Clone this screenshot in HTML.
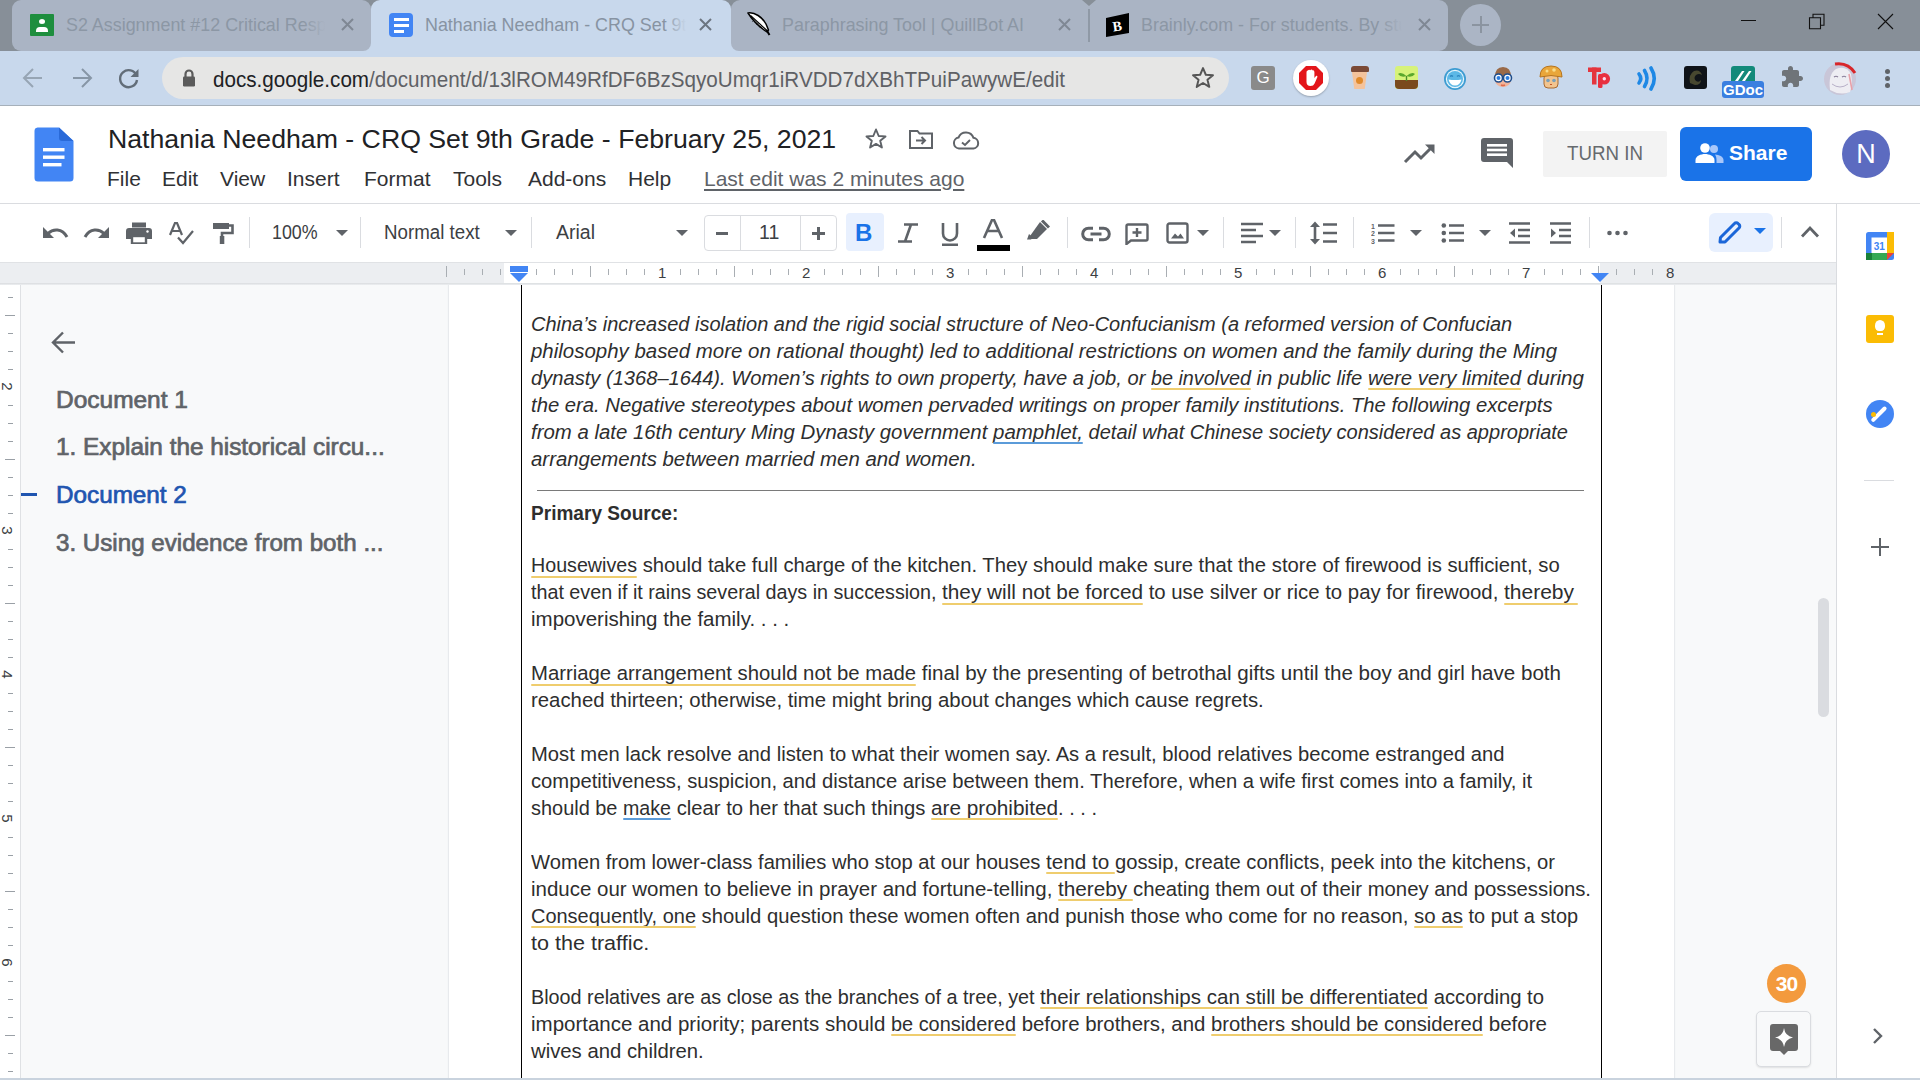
<!DOCTYPE html>
<html><head><meta charset="utf-8"><style>
*{margin:0;padding:0;box-sizing:border-box}
html,body{width:1920px;height:1080px;overflow:hidden;background:#fff;font-family:"Liberation Sans",sans-serif;position:relative}
.a{position:absolute}
.tabt{position:absolute;top:14px;font-size:17.9px;white-space:nowrap;overflow:hidden;line-height:22px}
.ln{position:absolute;left:531px;font-size:19.7px;line-height:27px;white-space:nowrap;color:#2e2e2e;transform-origin:0 0}
.it{font-style:italic}
.ul{position:absolute;height:2px;background:#efcd6e;border-radius:1px}
.ulb{background:#5b9bd9}
.mn{position:absolute;top:167px;font-size:21px;color:#303134;line-height:24px;white-space:nowrap}
.ic{position:absolute}
.sep{position:absolute;top:217px;width:1px;height:31px;background:#dadce0}
.dd{position:absolute;width:0;height:0;border-left:6px solid transparent;border-right:6px solid transparent;border-top:6px solid #5f6368}
.ol{position:absolute;left:56px;font-size:23px;color:#5f6368;white-space:nowrap;line-height:28px;font-weight:normal;-webkit-text-stroke:0.7px currentColor}
</style></head><body>
<!-- TAB STRIP -->
<div class="a" style="left:0;top:0;width:1920px;height:51px;background:#878f98"></div>
<div class="a" style="left:12px;top:0;width:359px;height:51px;background:#aab4c4;border-radius:9px"></div>
<div class="a" style="left:731px;top:0;width:717px;height:51px;background:#aab4c4;border-radius:9px"></div>
<div class="a" style="left:1082px;top:0;width:14px;height:6px;background:#878f98;clip-path:polygon(0 0,100% 0,50% 100%)"></div>
<div class="a" style="left:1088px;top:9px;width:2px;height:33px;background:#8f99a6"></div>
<!-- active tab with flares -->
<div class="a" style="left:363px;top:43px;width:376px;height:8px;background:#c8d8ec"></div>
<div class="a" style="left:355px;top:35px;width:16px;height:16px;background:#aab4c4;border-radius:0 0 8px 0"></div>
<div class="a" style="left:731px;top:35px;width:16px;height:16px;background:#aab4c4;border-radius:0 0 0 8px"></div>
<div class="a" style="left:371px;top:0;width:360px;height:51px;background:#c8d8ec;border-radius:9px 9px 0 0"></div>
<!-- favicons -->
<div class="a" style="left:30px;top:14px;width:24px;height:22px;background:#1e8e3e;border-radius:1px"></div>
<div class="a" style="left:39px;top:19px;width:6px;height:5px;background:#fff;border-radius:50%"></div>
<div class="a" style="left:36px;top:27px;width:12px;height:5px;background:#fff;border-radius:4px 4px 0 0"></div>
<div class="a tabt" style="left:66px;width:262px;color:#8c97a5">S2 Assignment #12 Critical Response</div>
<div class="a" style="left:303px;top:10px;width:30px;height:32px;background:linear-gradient(90deg,rgba(170,180,196,0),#aab4c4 75%)"></div>
<div class="a" style="left:389px;top:13px;width:24px;height:24px;background:#4285f4;border-radius:4px"></div>
<div class="a" style="left:394px;top:18px;width:15px;height:3px;background:#fff"></div>
<div class="a" style="left:394px;top:24px;width:15px;height:3px;background:#fff"></div>
<div class="a" style="left:394px;top:30px;width:10px;height:3px;background:#fff"></div>
<div class="a tabt" style="left:425px;width:266px;color:#8793a2">Nathania Needham - CRQ Set 9th Grade</div>
<div class="a" style="left:664px;top:10px;width:30px;height:32px;background:linear-gradient(90deg,rgba(200,216,236,0),#c8d8ec 75%)"></div>
<svg class="a" style="left:746px;top:11px" width="26" height="26" viewBox="0 0 26 26"><path d="M2 2 C9 1 16 6 20 13 L22.5 19 L21 21 C15 17 7 10 2 2 Z" fill="#fff" stroke="#000" stroke-width="1.5" stroke-linejoin="round"/><path d="M4.5 4.5 L21 19.5" stroke="#000" stroke-width="1.2"/><path d="M20.5 19 L23.5 24" stroke="#000" stroke-width="2"/><path d="M8 9 L6.5 10.5 M12 12.5 L10.5 14 M15 15.5 L14 16.5" stroke="#000" stroke-width="0.9"/></svg>
<div class="a tabt" style="left:782px;width:262px;color:#8c97a5">Paraphrasing Tool | QuillBot AI</div>
<svg class="a" style="left:1105px;top:13px" width="26" height="25" viewBox="0 0 26 25"><path d="M1 5 L24 0 L24 20 L1 24 Z" fill="#000"/><text x="12" y="18" font-family="Liberation Serif" font-weight="bold" font-size="14" fill="#fff" text-anchor="middle" transform="rotate(-8 12 12)">B</text></svg>
<div class="a tabt" style="left:1141px;width:266px;color:#8c97a5">Brainly.com - For students. By students.</div>

<div class="a" style="left:1380px;top:10px;width:30px;height:32px;background:linear-gradient(90deg,rgba(170,180,196,0),#aab4c4 75%)"></div>
<!-- close x -->
<svg class="a" style="left:340px;top:18px" width="16" height="14" viewBox="0 0 16 14"><path d="M2 1 L13 12 M13 1 L2 12" stroke="#7f8894" stroke-width="2"/></svg>
<svg class="a" style="left:698px;top:18px" width="16" height="14" viewBox="0 0 16 14"><path d="M2 1 L13 12 M13 1 L2 12" stroke="#6c7580" stroke-width="2"/></svg>
<svg class="a" style="left:1057px;top:18px" width="16" height="14" viewBox="0 0 16 14"><path d="M2 1 L13 12 M13 1 L2 12" stroke="#7f8894" stroke-width="2"/></svg>
<svg class="a" style="left:1417px;top:18px" width="16" height="14" viewBox="0 0 16 14"><path d="M2 1 L13 12 M13 1 L2 12" stroke="#7f8894" stroke-width="2"/></svg>
<!-- new tab -->
<div class="a" style="left:1460px;top:4px;width:41px;height:42px;border-radius:50%;background:#abb5c5"></div>
<div class="a" style="left:1472px;top:24px;width:17px;height:2px;background:#8b94a0"></div>
<div class="a" style="left:1480px;top:16px;width:2px;height:17px;background:#8b94a0"></div>
<!-- window controls -->
<div class="a" style="left:1741px;top:20px;width:15px;height:1.2px;background:#111"></div>
<svg class="a" style="left:1806px;top:12px" width="20" height="20" viewBox="0 0 20 20"><path d="M3.5 5.8 H14.5 V16.8 H3.5 Z M7 5.8 V2.3 H18 V13.3 H14.5" fill="none" stroke="#111" stroke-width="1.1"/></svg>
<svg class="a" style="left:1876px;top:12px" width="20" height="20" viewBox="0 0 20 20"><path d="M2 2 L17 17 M17 2 L2 17" stroke="#111" stroke-width="1.1"/></svg>

<!-- TOOLBAR -->
<div class="a" style="left:0;top:51px;width:1920px;height:54px;background:#c8d8ec"></div>
<div class="a" style="left:0;top:105px;width:1920px;height:1px;background:#a6b0ba"></div>
<svg class="a" style="left:21px;top:66px" width="24" height="24" viewBox="0 0 24 24"><path d="M21 12 H4 M12 3 L3 12 L12 21" fill="none" stroke="#97a5b4" stroke-width="2"/></svg>
<svg class="a" style="left:70px;top:66px" width="24" height="24" viewBox="0 0 24 24"><path d="M3 12 H20 M12 3 L21 12 L12 21" fill="none" stroke="#8796a6" stroke-width="2"/></svg>
<svg class="a" style="left:117px;top:66px" width="24" height="24" viewBox="0 0 24 24"><path d="M19.5 9.5 A8.5 8.5 0 1 0 20 14" fill="none" stroke="#626d78" stroke-width="2.4"/><path d="M21.5 3 V11 H13.5 Z" fill="#626d78"/></svg>
<div class="a" style="left:162px;top:57px;width:1067px;height:42px;border-radius:21px;background:#e6e6e5"></div>
<svg class="a" style="left:181px;top:68px" width="16" height="20" viewBox="0 0 16 20"><path d="M4.5 9 V6 A3.5 3.5 0 0 1 11.5 6 V9" fill="none" stroke="#5b5b5b" stroke-width="2.2"/><rect x="2" y="8.5" width="12" height="10" rx="1.2" fill="#5b5b5b"/></svg>
<div class="a" style="left:213px;top:67.5px;font-size:21.4px;white-space:nowrap;color:#5f6165;transform-origin:0 0;transform:scaleX(0.965)"><span style="color:#202124">docs.google.com</span>/document/d/13lROM49RfDF6BzSqyoUmqr1iRVDD7dXBhTPuiPawywE/edit</div>
<svg class="a" style="left:1190px;top:65px" width="26" height="26" viewBox="0 0 24 24"><path d="M12 2.8 L14.6 9 L21.2 9.4 L16.1 13.7 L17.8 20.2 L12 16.6 L6.2 20.2 L7.9 13.7 L2.8 9.4 L9.4 9 Z" fill="none" stroke="#555" stroke-width="1.8" stroke-linejoin="round"/></svg>
<!-- extensions -->
<div class="a" style="left:1251px;top:66px;width:24px;height:24px;background:#8a8a8a;border-radius:3px;color:#fff;font-size:17px;text-align:center;line-height:24px">G</div>
<div class="a" style="left:1293px;top:60px;width:36px;height:36px;border-radius:50%;background:#fff;box-shadow:0 1px 2px rgba(0,0,0,.25)"></div>
<svg class="a" style="left:1299px;top:66px" width="24" height="24" viewBox="0 0 24 24"><path d="M7 0 H17 L24 7 V17 L17 24 H7 L0 17 V7 Z" fill="#e3151a"/><path d="M7.5 6.5 Q7.5 4.5 8.8 4.6 Q10 3 11.2 4.2 Q12.6 2.8 13.8 4.4 Q15.2 4 15.4 6 V12 L17.2 9.8 Q18.6 9.6 18.4 11 L15.6 17.5 Q14.5 20 11.5 20 Q7.6 20 7.5 16 Z" fill="#fff"/></svg>
<div class="a" style="left:1351px;top:66px;width:18px;height:6px;background:#7b4a36;border-radius:3px 3px 1px 1px"></div>
<div class="a" style="left:1352px;top:72px;width:15px;height:17px;background:#f4c39c;clip-path:polygon(0 0,100% 0,85% 100%,15% 100%)"></div>
<div class="a" style="left:1356px;top:77px;width:7px;height:7px;background:#e08a2c;border-radius:50%"></div>
<div class="a" style="left:1395px;top:66px;width:23px;height:23px;background:#d7f27a;border-radius:3px"></div>
<div class="a" style="left:1395px;top:80px;width:23px;height:9px;background:#7a4a1e;border-radius:0 0 4px 4px"></div>
<svg class="a" style="left:1395px;top:70px" width="23" height="11" viewBox="0 0 23 11"><path d="M11.5 11 V6" stroke="#4a8f2a" stroke-width="1.4"/><path d="M11.5 6 Q6 1 3 4 Q6 8 11.5 6 Z" fill="#5aa82c"/><path d="M11.5 6 Q17 1 20 4 Q17 8 11.5 6 Z" fill="#5aa82c"/></svg>
<svg class="a" style="left:1443px;top:67px" width="24" height="24" viewBox="0 0 24 24"><circle cx="12" cy="12" r="11" fill="#3d9cd2"/><circle cx="12" cy="12" r="9.2" fill="#e8f6fc"/><circle cx="12" cy="12" r="8" fill="#5cb8e6"/><path d="M5.5 12.5 Q12 13.5 18.5 12.5 Q17 18.5 12 18.5 Q7 18.5 5.5 12.5 Z" fill="#fff"/><path d="M7 9.5 Q8.5 8 10 9.5 M14 9.5 Q15.5 8 17 9.5" fill="none" stroke="#2c86c0" stroke-width="1.2"/></svg>
<svg class="a" style="left:1491px;top:65px" width="24" height="24" viewBox="0 0 24 24"><path d="M4 12 Q4 2 12 2 Q20 2 20 12 Z" fill="#9a6a48"/><ellipse cx="12" cy="15" rx="8" ry="7" fill="#f0b49a"/><path d="M4 10 Q8 5 12 8 Q16 5 20 10 L20 12 L4 12 Z" fill="#9a6a48"/><circle cx="7.5" cy="13" r="4" fill="#fff" stroke="#1f4e8c" stroke-width="1.6"/><circle cx="16.5" cy="13" r="4" fill="#fff" stroke="#1f4e8c" stroke-width="1.6"/><circle cx="7.5" cy="13" r="2" fill="#2a7de1"/><circle cx="16.5" cy="13" r="2" fill="#2a7de1"/><path d="M10 20 Q12 21 14 20" stroke="#e06a4a" stroke-width="1.5" fill="none"/></svg>
<svg class="a" style="left:1539px;top:65px" width="24" height="25" viewBox="0 0 24 25"><rect x="5" y="9" width="14" height="14" rx="4" fill="#f2c48f" stroke="#a86a30" stroke-width="1"/><path d="M1 12 Q1 1 12 1 Q23 1 23 12 Q12 9 1 12 Z" fill="#e9a63a" stroke="#b5741f" stroke-width="1"/><circle cx="8" cy="6" r="1.5" fill="#f8dc8a"/><circle cx="15" cy="5" r="1.8" fill="#f8dc8a"/><circle cx="9" cy="15.5" r="1.8" fill="#7aa0b8"/><circle cx="15" cy="15.5" r="1.8" fill="#7aa0b8"/><path d="M11 19 L12 20 L13 19" stroke="#c0552a" stroke-width="1" fill="none"/></svg>
<svg class="a" style="left:1587px;top:65px" width="25" height="25" viewBox="0 0 25 25"><rect x="1" y="2.5" width="13" height="4.5" fill="#e5353d"/><rect x="5" y="2.5" width="4.5" height="17" fill="#e5353d"/><rect x="11" y="9" width="4.5" height="14" rx="1.5" fill="#e8303f"/><circle cx="17.3" cy="13.8" r="5.8" fill="#e8303f"/><circle cx="17.3" cy="13.8" r="1.7" fill="#fde"/></svg>
<svg class="a" style="left:1634px;top:64px" width="25" height="27" viewBox="0 0 25 27"><path d="M5 10 Q8.5 14.5 5 19" fill="none" stroke="#1e88e5" stroke-width="3.6" stroke-linecap="round"/><path d="M10.5 6.5 Q15.5 14.5 10.5 22.5" fill="none" stroke="#1e88e5" stroke-width="3.6" stroke-linecap="round"/><path d="M17 4 Q23.5 14.5 17 25" fill="none" stroke="#1e88e5" stroke-width="3.6" stroke-linecap="round"/></svg>
<div class="a" style="left:1684px;top:66px;width:23px;height:23px;background:#0f1318;border-radius:3px"></div>
<svg class="a" style="left:1684px;top:66px" width="23" height="23" viewBox="0 0 23 23"><path d="M6 17 Q4 9 10 5 Q16 3 18 9 Q15 7 12 9 Q9 12 12 15 Q15 17 17 14 Q17 19 11 19 Z" fill="#47472f"/></svg>
<div class="a" style="left:1731px;top:66px;width:24px;height:16px;background:#138a7a;border-radius:3px 3px 0 0"></div>
<svg class="a" style="left:1731px;top:66px" width="24" height="15" viewBox="0 0 24 15"><path d="M4 15 L11 5 L13.5 5 L7 15 Z M11 15 L18 5 L20.5 5 L14 15 Z" fill="#fff"/></svg>
<div class="a" style="left:1722px;top:81px;width:42px;height:17px;background:#3a7fe0;border-radius:3px;color:#fff;font-size:15px;font-weight:bold;line-height:17px;text-align:center">GDoc</div>
<svg class="a" style="left:1780px;top:65px" width="24" height="24" viewBox="0 0 24 24"><path d="M20.5 11H19V7c0-1.1-.9-2-2-2h-4V3.5C13 2.12 11.88 1 10.5 1S8 2.12 8 3.5V5H4c-1.1 0-1.99.9-1.99 2v3.8H3.5c1.49 0 2.7 1.21 2.7 2.7s-1.21 2.7-2.7 2.7H2V20c0 1.1.9 2 2 2h3.8v-1.5c0-1.49 1.21-2.7 2.7-2.7 1.49 0 2.7 1.21 2.7 2.7V22H17c1.1 0 2-.9 2-2v-4h1.5c1.38 0 2.5-1.12 2.5-2.5S21.88 11 20.5 11z" fill="#6f7479"/></svg>
<svg class="a" style="left:1822px;top:60px" width="36" height="36" viewBox="0 0 36 36"><circle cx="18" cy="19" r="16" fill="#c9c6d8"/><path d="M8 30 Q6 14 14 9 Q24 5 29 14 Q31 24 28 32 Q18 36 8 30 Z" fill="#eeedf3"/><path d="M12 17 Q14 15.5 16 17 M20 17 Q22 15.5 24 17" stroke="#8a7f9a" stroke-width="1.2" fill="none"/><path d="M13 4 Q26 2 33 13" stroke="#d8262a" stroke-width="3" fill="none"/><path d="M27 14 L30 30" stroke="#e8a0a8" stroke-width="1.5"/><path d="M10 24 Q18 30 26 24" stroke="#b8b0c8" stroke-width="1" fill="none"/></svg>
<div class="a" style="left:1885px;top:69px;width:5px;height:5px;border-radius:50%;background:#5f6368"></div>
<div class="a" style="left:1885px;top:76px;width:5px;height:5px;border-radius:50%;background:#5f6368"></div>
<div class="a" style="left:1885px;top:83px;width:5px;height:5px;border-radius:50%;background:#5f6368"></div>

<div class="a" style="left:0;top:106px;width:1920px;height:98px;background:#fff"></div>
<svg class="ic" style="left:34px;top:127px" width="40" height="55" viewBox="0 0 40 55"><path d="M3.5 0.5 H25 L39.5 14 V51 A3.5 3.5 0 0 1 36 54.5 H4 A3.5 3.5 0 0 1 0.5 51 V4 A3.5 3.5 0 0 1 3.5 0.5 Z" fill="#4285f4"/><path d="M25 0.5 L39.5 14 H28 A3 3 0 0 1 25 11 Z" fill="#2a6ad8"/><rect x="9" y="21" width="21.5" height="3.4" fill="#fff"/><rect x="9" y="28.5" width="21.5" height="3.4" fill="#fff"/><rect x="9" y="36" width="18.5" height="3.4" fill="#fff"/></svg>
<div class="a" style="left:108px;top:123px;font-size:26.4px;line-height:32px;color:#202124;white-space:nowrap;transform-origin:0 0;transform:scaleX(1.011)">Nathania Needham - CRQ Set 9th Grade - February 25, 2021</div>
<svg class="ic" style="left:863px;top:127px" width="26" height="24" viewBox="0 0 24 24"><path d="M12 2.5 L14.7 9 L21.5 9.4 L16.2 13.8 L17.9 20.5 L12 16.9 L6.1 20.5 L7.8 13.8 L2.5 9.4 L9.3 9 Z" fill="none" stroke="#5f6368" stroke-width="1.9" stroke-linejoin="round"/></svg>
<svg class="ic" style="left:908px;top:128px" width="26" height="22" viewBox="0 0 26 22"><path d="M2 3 H9.5 L11.5 5.5 H24 V20 H2 Z" fill="none" stroke="#5f6368" stroke-width="2"/><path d="M8 12.5 H17 M13.5 9 L17 12.5 L13.5 16" fill="none" stroke="#5f6368" stroke-width="2"/></svg>
<svg class="ic" style="left:952px;top:130px" width="28" height="20" viewBox="0 0 28 20"><path d="M7 18.5 A5.5 5.5 0 0 1 6.5 7.6 A8 8 0 0 1 21.5 7.8 A5.4 5.4 0 0 1 21.5 18.5 Z" fill="none" stroke="#5f6368" stroke-width="2"/><path d="M10 12.5 L13 15 L18 10" fill="none" stroke="#5f6368" stroke-width="1.9"/></svg>
<div class="mn" style="left:107px">File</div>
<div class="mn" style="left:162px">Edit</div>
<div class="mn" style="left:220px">View</div>
<div class="mn" style="left:287px">Insert</div>
<div class="mn" style="left:364px">Format</div>
<div class="mn" style="left:453px">Tools</div>
<div class="mn" style="left:528px">Add-ons</div>
<div class="mn" style="left:628px">Help</div>
<div class="mn" style="left:704px;color:#5f6368;text-decoration:underline;text-underline-offset:3px;transform-origin:0 0;transform:scaleX(1.0)">Last edit was 2 minutes ago</div>
<svg class="ic" style="left:1403px;top:141px" width="34" height="24" viewBox="0 0 34 24"><path d="M2 21 L12 11 L18 17 L30 5" fill="none" stroke="#5f6368" stroke-width="3"/><path d="M22 3.5 H31.5 V13 Z" fill="#5f6368"/></svg>
<svg class="ic" style="left:1480px;top:137px" width="34" height="32" viewBox="0 0 34 32"><path d="M4 1 H30 A3 3 0 0 1 33 4 V31 L27 25 H4 A3 3 0 0 1 1 22 V4 A3 3 0 0 1 4 1 Z" fill="#5f6368"/><rect x="7" y="7" width="20" height="2.6" fill="#fff"/><rect x="7" y="11.7" width="20" height="2.6" fill="#fff"/><rect x="7" y="16.4" width="20" height="2.6" fill="#fff"/></svg>
<div class="a" style="left:1543px;top:131px;width:124px;height:46px;background:#f3f3f3;border-radius:2px"></div>
<div class="a" style="left:1567px;top:141px;font-size:20px;line-height:24px;color:#666a6e;white-space:nowrap;transform-origin:0 0;transform:scaleX(0.936)">TURN IN</div>
<div class="a" style="left:1680px;top:127px;width:132px;height:54px;background:#1a73e8;border-radius:6px"></div>
<svg class="ic" style="left:1695px;top:142px" width="30" height="22" viewBox="0 0 30 22"><circle cx="10" cy="6" r="4.8" fill="#fff"/><path d="M0.5 21 V18 C0.5 14 6 12 10 12 C14 12 19.5 14 19.5 18 V21 Z" fill="#fff"/><circle cx="19" cy="7" r="4" fill="#a8c7fa"/><path d="M20 12.5 C24 12.8 28.5 14.5 28.5 18 V21 H21.5 V18 C21.5 16 21 14 20 12.5 Z" fill="#a8c7fa"/></svg>
<div class="a" style="left:1729px;top:140px;font-size:21px;line-height:26px;color:#fff;font-weight:bold;white-space:nowrap">Share</div>
<div class="a" style="left:1842px;top:130px;width:48px;height:48px;border-radius:50%;background:#5c6bc0;color:#fff;font-size:27px;line-height:48px;text-align:center">N</div>
<div class="a" style="left:0;top:203px;width:1920px;height:1px;background:#dadce0"></div>
<svg class="ic" style="left:40px;top:224px" width="30" height="18" viewBox="0 0 30 18"><path d="M3 3 V14 H14 Z" fill="#5f6368"/><path d="M8 9.5 C13 4.5 22 4 27 13" fill="none" stroke="#5f6368" stroke-width="3"/></svg>
<svg class="ic" style="left:82px;top:224px" width="30" height="18" viewBox="0 0 30 18"><path d="M27 3 V14 H16 Z" fill="#5f6368"/><path d="M22 9.5 C17 4.5 8 4 3 13" fill="none" stroke="#5f6368" stroke-width="3"/></svg>
<svg class="ic" style="left:126px;top:222px" width="26" height="22" viewBox="0 0 26 22"><rect x="6" y="0.5" width="14" height="5" fill="#5f6368"/><path d="M3 6 H23 A3 3 0 0 1 26 9 V17 H20 V14 H6 V17 H0 V9 A3 3 0 0 1 3 6 Z" fill="#5f6368"/><rect x="6" y="14" width="14" height="7.5" fill="none" stroke="#5f6368" stroke-width="2.4"/><circle cx="21.5" cy="9.5" r="1.2" fill="#fff"/></svg>
<svg class="ic" style="left:169px;top:222px" width="26" height="23" viewBox="0 0 26 23"><path d="M1 13 L6 1 H8 L13 13 M3.2 9 H10.8" fill="none" stroke="#5f6368" stroke-width="2.2"/><path d="M9 15.5 L14 21 L24 9" fill="none" stroke="#5f6368" stroke-width="2.2"/></svg>
<svg class="ic" style="left:212px;top:222px" width="22" height="22" viewBox="0 0 22 22"><path d="M1 1 H17 V7 H1 Z" fill="#5f6368"/><path d="M17 3.5 H20.5 V11 H10 V15" fill="none" stroke="#5f6368" stroke-width="2.6"/><rect x="7.8" y="14" width="4.5" height="8" fill="#5f6368"/></svg>
<div class="sep" style="left:249px"></div>
<div class="sep" style="left:360px"></div>
<div class="sep" style="left:531px"></div>
<div class="sep" style="left:1067px"></div>
<div class="sep" style="left:1223px"></div>
<div class="sep" style="left:1295px"></div>
<div class="sep" style="left:1353px"></div>
<div class="sep" style="left:1589px"></div>
<div class="sep" style="left:1781px"></div>
<div class="a" style="left:272px;top:221px;font-size:19.5px;line-height:22px;color:#3c4043;white-space:nowrap;transform-origin:0 0;transform:scaleX(0.915)">100%</div>
<div class="dd" style="left:336px;top:230px"></div>
<div class="a" style="left:384px;top:221px;font-size:19.5px;line-height:22px;color:#3c4043;white-space:nowrap;transform-origin:0 0;transform:scaleX(0.96)">Normal text</div>
<div class="dd" style="left:505px;top:230px"></div>
<div class="a" style="left:556px;top:221px;font-size:19.5px;line-height:22px;color:#3c4043;white-space:nowrap">Arial</div>
<div class="dd" style="left:676px;top:230px"></div>
<div class="a" style="left:704px;top:215px;width:133px;height:36px;border:1px solid #dadce0;border-radius:4px"></div>
<div class="a" style="left:740px;top:216px;width:1px;height:34px;background:#dadce0"></div>
<div class="a" style="left:800px;top:216px;width:1px;height:34px;background:#dadce0"></div>
<div class="a" style="left:716px;top:232px;width:12px;height:2.5px;background:#5f6368"></div>
<div class="a" style="left:812px;top:232px;width:12.5px;height:2.5px;background:#5f6368"></div>
<div class="a" style="left:817px;top:226.5px;width:2.5px;height:13px;background:#5f6368"></div>
<div class="a" style="left:759px;top:221px;font-size:19.5px;line-height:22px;color:#3c4043;white-space:nowrap">11</div>
<div class="a" style="left:846px;top:213px;width:38px;height:38px;background:#e8f0fe;border-radius:4px"></div>
<div class="a" style="left:855px;top:219px;font-size:24px;line-height:28px;color:#1a73e8;font-weight:bold">B</div>
<svg class="ic" style="left:896px;top:223px" width="24" height="20" viewBox="0 0 24 20"><path d="M8 1.5 H22 M2 18.5 H16 M15 1.5 L9 18.5" fill="none" stroke="#5f6368" stroke-width="2.6"/></svg>
<svg class="ic" style="left:939px;top:222px" width="22" height="25" viewBox="0 0 22 25"><path d="M4 1 V11.5 A7 7 0 0 0 18 11.5 V1" fill="none" stroke="#5f6368" stroke-width="2.6"/><rect x="3" y="21.5" width="16" height="2.5" fill="#5f6368"/></svg>
<svg class="ic" style="left:982px;top:219px" width="22" height="20" viewBox="0 0 22 20"><path d="M2 19 L10 1 H12 L20 19 M5.5 12 H16.5" fill="none" stroke="#5f6368" stroke-width="2.6"/></svg>
<div class="a" style="left:977px;top:245px;width:33px;height:6px;background:#000"></div>
<svg class="ic" style="left:1026px;top:220px" width="24" height="20" viewBox="0 0 24 20"><path d="M14 2 L21 9 L11 19 H4 V16 Z" fill="#5f6368"/><path d="M16 0.5 L23 7.5" stroke="#5f6368" stroke-width="3"/><path d="M1 19.5 H5 L7 17.5 L3 14 Z" fill="#5f6368"/></svg>
<svg class="ic" style="left:1081px;top:226px" width="30" height="16" viewBox="0 0 30 16"><path d="M12 2.2 H7.5 A5.8 5.8 0 0 0 7.5 13.8 H12 M18 2.2 H22.5 A5.8 5.8 0 0 1 22.5 13.8 H18 M9.5 8 H20.5" fill="none" stroke="#5f6368" stroke-width="3"/></svg>
<svg class="ic" style="left:1125px;top:223px" width="24" height="22" viewBox="0 0 24 22"><path d="M3 1.5 H21 A1.5 1.5 0 0 1 22.5 3 V16 A1.5 1.5 0 0 1 21 17.5 H6 L1.5 21 V3 A1.5 1.5 0 0 1 3 1.5 Z" fill="none" stroke="#5f6368" stroke-width="2.4"/><path d="M12 5 V14 M7.5 9.5 H16.5" stroke="#5f6368" stroke-width="2.4"/></svg>
<svg class="ic" style="left:1166px;top:222px" width="23" height="22" viewBox="0 0 23 22"><rect x="1.5" y="1.5" width="20" height="19" rx="2" fill="none" stroke="#5f6368" stroke-width="2.4"/><path d="M5 16.5 L9 11.5 L12 14.5 L14.5 11.5 L18 16.5 Z" fill="#5f6368"/></svg>
<div class="dd" style="left:1197px;top:230px"></div>
<svg class="ic" style="left:1241px;top:222px" width="23" height="22" viewBox="0 0 23 22"><path d="M0 2 H22 M0 8 H15 M0 14 H22 M0 20 H15" stroke="#5f6368" stroke-width="2.5"/></svg>
<div class="dd" style="left:1269px;top:230px"></div>
<svg class="ic" style="left:1309px;top:221px" width="30" height="24" viewBox="0 0 30 24"><path d="M6 3 V21" stroke="#5f6368" stroke-width="2.6"/><path d="M1 6 L6 0.5 L11 6 Z M1 18 L6 23.5 L11 18 Z" fill="#5f6368"/><path d="M14 3.5 H28 M14 12 H28 M14 20.5 H28" stroke="#5f6368" stroke-width="2.5"/></svg>
<svg class="ic" style="left:1371px;top:222px" width="24" height="22" viewBox="0 0 24 22"><text x="0" y="6.5" font-size="7" font-weight="bold" fill="#5f6368" font-family="Liberation Sans">1</text><text x="0" y="14" font-size="7" font-weight="bold" fill="#5f6368" font-family="Liberation Sans">2</text><text x="0" y="21.5" font-size="7" font-weight="bold" fill="#5f6368" font-family="Liberation Sans">3</text><path d="M7 3.5 H23.5 M7 11 H23.5 M7 18.5 H23.5" stroke="#5f6368" stroke-width="2.5"/></svg>
<div class="dd" style="left:1410px;top:230px"></div>
<svg class="ic" style="left:1441px;top:222px" width="24" height="22" viewBox="0 0 24 22"><circle cx="2.8" cy="3.5" r="2.3" fill="#5f6368"/><circle cx="2.8" cy="11" r="2.3" fill="#5f6368"/><circle cx="2.8" cy="18.5" r="2.3" fill="#5f6368"/><path d="M8 3.5 H23 M8 11 H23 M8 18.5 H23" stroke="#5f6368" stroke-width="2.5"/></svg>
<div class="dd" style="left:1479px;top:230px"></div>
<svg class="ic" style="left:1509px;top:222px" width="22" height="22" viewBox="0 0 22 22"><path d="M0 1.5 H21 M9 8 H21 M9 14 H21 M0 20.5 H21" stroke="#5f6368" stroke-width="2.5"/><path d="M6 6.5 L1 11 L6 15.5 Z" fill="#5f6368"/></svg>
<svg class="ic" style="left:1550px;top:222px" width="22" height="22" viewBox="0 0 22 22"><path d="M0 1.5 H21 M9 8 H21 M9 14 H21 M0 20.5 H21" stroke="#5f6368" stroke-width="2.5"/><path d="M1 6.5 L6 11 L1 15.5 Z" fill="#5f6368"/></svg>
<svg class="ic" style="left:1606px;top:229px" width="24" height="8" viewBox="0 0 24 8"><circle cx="3.5" cy="4" r="2.3" fill="#5f6368"/><circle cx="11.5" cy="4" r="2.3" fill="#5f6368"/><circle cx="19.5" cy="4" r="2.3" fill="#5f6368"/></svg>
<div class="a" style="left:1709px;top:213px;width:64px;height:39px;background:#e8f0fe;border-radius:6px"></div>
<svg class="ic" style="left:1717px;top:220px" width="25" height="25" viewBox="0 0 25 25"><path d="M3 22 L3.5 17.5 L17.5 3.5 A2.3 2.3 0 0 1 21 3.5 L22 4.5 A2.3 2.3 0 0 1 22 8 L8 22 Z" fill="none" stroke="#1b66d8" stroke-width="3" stroke-linejoin="round"/></svg>
<div class="dd" style="left:1754px;top:228px;border-top-color:#1a73e8"></div>
<svg class="ic" style="left:1800px;top:225px" width="20" height="13" viewBox="0 0 20 13"><path d="M2 11.5 L10 3 L18 11.5" fill="none" stroke="#5f6368" stroke-width="2.8"/></svg>
<div class="a" style="left:0;top:262px;width:1837px;height:21px;background:#eceef1;border-top:1px solid #e0e2e5"></div>
<div class="a" style="left:504px;top:263px;width:1096px;height:20px;background:#fff"></div>
<div class="a" style="left:446px;top:266px;width:1px;height:11px;background:#a9aeb3"></div><div class="a" style="left:464px;top:269px;width:1px;height:6px;background:#a9aeb3"></div><div class="a" style="left:482px;top:269px;width:1px;height:6px;background:#a9aeb3"></div><div class="a" style="left:500px;top:269px;width:1px;height:6px;background:#a9aeb3"></div><div class="a" style="left:536px;top:269px;width:1px;height:6px;background:#a9aeb3"></div><div class="a" style="left:554px;top:269px;width:1px;height:6px;background:#a9aeb3"></div><div class="a" style="left:572px;top:269px;width:1px;height:6px;background:#a9aeb3"></div><div class="a" style="left:590px;top:266px;width:1px;height:11px;background:#a9aeb3"></div><div class="a" style="left:608px;top:269px;width:1px;height:6px;background:#a9aeb3"></div><div class="a" style="left:626px;top:269px;width:1px;height:6px;background:#a9aeb3"></div><div class="a" style="left:644px;top:269px;width:1px;height:6px;background:#a9aeb3"></div><div class="a" style="left:680px;top:269px;width:1px;height:6px;background:#a9aeb3"></div><div class="a" style="left:698px;top:269px;width:1px;height:6px;background:#a9aeb3"></div><div class="a" style="left:716px;top:269px;width:1px;height:6px;background:#a9aeb3"></div><div class="a" style="left:734px;top:266px;width:1px;height:11px;background:#a9aeb3"></div><div class="a" style="left:752px;top:269px;width:1px;height:6px;background:#a9aeb3"></div><div class="a" style="left:770px;top:269px;width:1px;height:6px;background:#a9aeb3"></div><div class="a" style="left:788px;top:269px;width:1px;height:6px;background:#a9aeb3"></div><div class="a" style="left:824px;top:269px;width:1px;height:6px;background:#a9aeb3"></div><div class="a" style="left:842px;top:269px;width:1px;height:6px;background:#a9aeb3"></div><div class="a" style="left:860px;top:269px;width:1px;height:6px;background:#a9aeb3"></div><div class="a" style="left:878px;top:266px;width:1px;height:11px;background:#a9aeb3"></div><div class="a" style="left:896px;top:269px;width:1px;height:6px;background:#a9aeb3"></div><div class="a" style="left:914px;top:269px;width:1px;height:6px;background:#a9aeb3"></div><div class="a" style="left:932px;top:269px;width:1px;height:6px;background:#a9aeb3"></div><div class="a" style="left:968px;top:269px;width:1px;height:6px;background:#a9aeb3"></div><div class="a" style="left:986px;top:269px;width:1px;height:6px;background:#a9aeb3"></div><div class="a" style="left:1004px;top:269px;width:1px;height:6px;background:#a9aeb3"></div><div class="a" style="left:1022px;top:266px;width:1px;height:11px;background:#a9aeb3"></div><div class="a" style="left:1040px;top:269px;width:1px;height:6px;background:#a9aeb3"></div><div class="a" style="left:1058px;top:269px;width:1px;height:6px;background:#a9aeb3"></div><div class="a" style="left:1076px;top:269px;width:1px;height:6px;background:#a9aeb3"></div><div class="a" style="left:1112px;top:269px;width:1px;height:6px;background:#a9aeb3"></div><div class="a" style="left:1130px;top:269px;width:1px;height:6px;background:#a9aeb3"></div><div class="a" style="left:1148px;top:269px;width:1px;height:6px;background:#a9aeb3"></div><div class="a" style="left:1166px;top:266px;width:1px;height:11px;background:#a9aeb3"></div><div class="a" style="left:1184px;top:269px;width:1px;height:6px;background:#a9aeb3"></div><div class="a" style="left:1202px;top:269px;width:1px;height:6px;background:#a9aeb3"></div><div class="a" style="left:1220px;top:269px;width:1px;height:6px;background:#a9aeb3"></div><div class="a" style="left:1256px;top:269px;width:1px;height:6px;background:#a9aeb3"></div><div class="a" style="left:1274px;top:269px;width:1px;height:6px;background:#a9aeb3"></div><div class="a" style="left:1292px;top:269px;width:1px;height:6px;background:#a9aeb3"></div><div class="a" style="left:1310px;top:266px;width:1px;height:11px;background:#a9aeb3"></div><div class="a" style="left:1328px;top:269px;width:1px;height:6px;background:#a9aeb3"></div><div class="a" style="left:1346px;top:269px;width:1px;height:6px;background:#a9aeb3"></div><div class="a" style="left:1364px;top:269px;width:1px;height:6px;background:#a9aeb3"></div><div class="a" style="left:1400px;top:269px;width:1px;height:6px;background:#a9aeb3"></div><div class="a" style="left:1418px;top:269px;width:1px;height:6px;background:#a9aeb3"></div><div class="a" style="left:1436px;top:269px;width:1px;height:6px;background:#a9aeb3"></div><div class="a" style="left:1454px;top:266px;width:1px;height:11px;background:#a9aeb3"></div><div class="a" style="left:1472px;top:269px;width:1px;height:6px;background:#a9aeb3"></div><div class="a" style="left:1490px;top:269px;width:1px;height:6px;background:#a9aeb3"></div><div class="a" style="left:1508px;top:269px;width:1px;height:6px;background:#a9aeb3"></div><div class="a" style="left:1544px;top:269px;width:1px;height:6px;background:#a9aeb3"></div><div class="a" style="left:1562px;top:269px;width:1px;height:6px;background:#a9aeb3"></div><div class="a" style="left:1580px;top:269px;width:1px;height:6px;background:#a9aeb3"></div><div class="a" style="left:1598px;top:266px;width:1px;height:11px;background:#a9aeb3"></div><div class="a" style="left:1616px;top:269px;width:1px;height:6px;background:#a9aeb3"></div><div class="a" style="left:1634px;top:269px;width:1px;height:6px;background:#a9aeb3"></div><div class="a" style="left:1652px;top:269px;width:1px;height:6px;background:#a9aeb3"></div>
<div class="a" style="left:658px;top:263px;font-size:15px;line-height:20px;color:#3c4043">1</div>
<div class="a" style="left:802px;top:263px;font-size:15px;line-height:20px;color:#3c4043">2</div>
<div class="a" style="left:946px;top:263px;font-size:15px;line-height:20px;color:#3c4043">3</div>
<div class="a" style="left:1090px;top:263px;font-size:15px;line-height:20px;color:#3c4043">4</div>
<div class="a" style="left:1234px;top:263px;font-size:15px;line-height:20px;color:#3c4043">5</div>
<div class="a" style="left:1378px;top:263px;font-size:15px;line-height:20px;color:#3c4043">6</div>
<div class="a" style="left:1522px;top:263px;font-size:15px;line-height:20px;color:#3c4043">7</div>
<div class="a" style="left:1666px;top:263px;font-size:15px;line-height:20px;color:#3c4043">8</div>
<div class="a" style="left:510px;top:266px;width:18px;height:5.5px;background:#4285f4"></div>
<div class="a" style="left:510px;top:273px;width:0;height:0;border-left:9px solid transparent;border-right:9px solid transparent;border-top:9px solid #4285f4"></div>
<div class="a" style="left:1591px;top:273px;width:0;height:0;border-left:9px solid transparent;border-right:9px solid transparent;border-top:9px solid #4285f4"></div>
<div class="a" style="left:0;top:283px;width:1837px;height:2px;background:linear-gradient(#d9dbde,#eef0f2)"></div>
<div class="a" style="left:0;top:285px;width:1837px;height:795px;background:#f8f9fa"></div>
<div class="a" style="left:0;top:285px;width:21px;height:795px;background:#fff;border-right:1px solid #dfe1e4"></div>
<div class="a" style="left:8px;top:297px;width:5px;height:1px;background:#9aa0a6"></div><div class="a" style="left:5px;top:315px;width:10px;height:1px;background:#9aa0a6"></div><div class="a" style="left:8px;top:333px;width:5px;height:1px;background:#9aa0a6"></div><div class="a" style="left:8px;top:351px;width:5px;height:1px;background:#9aa0a6"></div><div class="a" style="left:8px;top:369px;width:5px;height:1px;background:#9aa0a6"></div><div class="a" style="left:8px;top:405px;width:5px;height:1px;background:#9aa0a6"></div><div class="a" style="left:8px;top:423px;width:5px;height:1px;background:#9aa0a6"></div><div class="a" style="left:8px;top:441px;width:5px;height:1px;background:#9aa0a6"></div><div class="a" style="left:5px;top:459px;width:10px;height:1px;background:#9aa0a6"></div><div class="a" style="left:8px;top:477px;width:5px;height:1px;background:#9aa0a6"></div><div class="a" style="left:8px;top:495px;width:5px;height:1px;background:#9aa0a6"></div><div class="a" style="left:8px;top:513px;width:5px;height:1px;background:#9aa0a6"></div><div class="a" style="left:8px;top:549px;width:5px;height:1px;background:#9aa0a6"></div><div class="a" style="left:8px;top:567px;width:5px;height:1px;background:#9aa0a6"></div><div class="a" style="left:8px;top:585px;width:5px;height:1px;background:#9aa0a6"></div><div class="a" style="left:5px;top:603px;width:10px;height:1px;background:#9aa0a6"></div><div class="a" style="left:8px;top:621px;width:5px;height:1px;background:#9aa0a6"></div><div class="a" style="left:8px;top:639px;width:5px;height:1px;background:#9aa0a6"></div><div class="a" style="left:8px;top:657px;width:5px;height:1px;background:#9aa0a6"></div><div class="a" style="left:8px;top:693px;width:5px;height:1px;background:#9aa0a6"></div><div class="a" style="left:8px;top:711px;width:5px;height:1px;background:#9aa0a6"></div><div class="a" style="left:8px;top:729px;width:5px;height:1px;background:#9aa0a6"></div><div class="a" style="left:5px;top:747px;width:10px;height:1px;background:#9aa0a6"></div><div class="a" style="left:8px;top:765px;width:5px;height:1px;background:#9aa0a6"></div><div class="a" style="left:8px;top:783px;width:5px;height:1px;background:#9aa0a6"></div><div class="a" style="left:8px;top:801px;width:5px;height:1px;background:#9aa0a6"></div><div class="a" style="left:8px;top:837px;width:5px;height:1px;background:#9aa0a6"></div><div class="a" style="left:8px;top:855px;width:5px;height:1px;background:#9aa0a6"></div><div class="a" style="left:8px;top:873px;width:5px;height:1px;background:#9aa0a6"></div><div class="a" style="left:5px;top:891px;width:10px;height:1px;background:#9aa0a6"></div><div class="a" style="left:8px;top:909px;width:5px;height:1px;background:#9aa0a6"></div><div class="a" style="left:8px;top:927px;width:5px;height:1px;background:#9aa0a6"></div><div class="a" style="left:8px;top:945px;width:5px;height:1px;background:#9aa0a6"></div><div class="a" style="left:8px;top:981px;width:5px;height:1px;background:#9aa0a6"></div><div class="a" style="left:8px;top:999px;width:5px;height:1px;background:#9aa0a6"></div><div class="a" style="left:8px;top:1017px;width:5px;height:1px;background:#9aa0a6"></div><div class="a" style="left:5px;top:1035px;width:10px;height:1px;background:#9aa0a6"></div><div class="a" style="left:8px;top:1053px;width:5px;height:1px;background:#9aa0a6"></div><div class="a" style="left:8px;top:1071px;width:5px;height:1px;background:#9aa0a6"></div>
<div class="a" style="left:3px;top:379px;font-size:15px;line-height:15px;color:#3c4043;transform:rotate(90deg)">2</div>
<div class="a" style="left:3px;top:523px;font-size:15px;line-height:15px;color:#3c4043;transform:rotate(90deg)">3</div>
<div class="a" style="left:3px;top:667px;font-size:15px;line-height:15px;color:#3c4043;transform:rotate(90deg)">4</div>
<div class="a" style="left:3px;top:811px;font-size:15px;line-height:15px;color:#3c4043;transform:rotate(90deg)">5</div>
<div class="a" style="left:3px;top:955px;font-size:15px;line-height:15px;color:#3c4043;transform:rotate(90deg)">6</div>
<div class="a" style="left:449px;top:285px;width:1225px;height:795px;background:#fff;box-shadow:0 0 1px 1px #e8eaed"></div>
<svg class="ic" style="left:50px;top:331px" width="26" height="23" viewBox="0 0 26 23"><path d="M25 11.5 H3 M13 1.5 L3 11.5 L13 21.5" fill="none" stroke="#5f6368" stroke-width="2.4"/></svg>
<div class="ol" style="top:386px;color:#5f6368;transform-origin:0 0;transform:scaleX(1.064)">Document 1</div>
<div class="ol" style="top:433px;color:#5f6368;transform-origin:0 0;transform:scaleX(1.058)">1. Explain the historical circu...</div>
<div class="ol" style="top:481px;color:#1f55b0;transform-origin:0 0;transform:scaleX(1.055)">Document 2</div>
<div class="ol" style="top:529px;color:#5f6368;transform-origin:0 0;transform:scaleX(1.05)">3. Using evidence from both ...</div>
<div class="a" style="left:21px;top:493px;width:16px;height:2.5px;background:#1f55b0"></div>
<div class="a" style="left:1836px;top:204px;width:1px;height:876px;background:#dadce0"></div>
<div class="a" style="left:1837px;top:204px;width:83px;height:876px;background:#fff"></div>
<svg class="ic" style="left:1866px;top:232px" width="28" height="28" viewBox="0 0 28 28"><rect x="0" y="0" width="28" height="28" rx="2.5" fill="#4285f4"/><rect x="21" y="0" width="7" height="21" fill="#fbbc04"/><rect x="0" y="21" width="21" height="7" fill="#34a853"/><path d="M21 21 H28 L21 28 Z" fill="#ea4335"/><rect x="0" y="21" width="6" height="7" fill="#188038"/><rect x="5.5" y="5.5" width="15.5" height="15.5" fill="#fff"/><text x="13.2" y="17.5" font-size="10" font-weight="bold" fill="#4285f4" text-anchor="middle" font-family="Liberation Sans">31</text></svg>
<div class="a" style="left:1866px;top:315px;width:28px;height:28px;background:#fbbc04;border-radius:3px"></div>
<div class="a" style="left:1875px;top:320px;width:10px;height:11px;background:#fff;border-radius:50% 50% 40% 40%"></div>
<div class="a" style="left:1877px;top:333px;width:6px;height:2px;background:#fff"></div>
<div class="a" style="left:1866px;top:400px;width:28px;height:28px;background:#4285f4;border-radius:50%"></div>
<div class="a" style="left:1877px;top:404px;width:3.5px;height:20px;background:#fff;transform:rotate(45deg);border-radius:2px"></div>
<div class="a" style="left:1871px;top:412px;width:5px;height:5px;background:#fbbc04;border-radius:50%"></div>
<div class="a" style="left:1864px;top:480px;width:30px;height:1px;background:#dadce0"></div>
<div class="a" style="left:1879px;top:538px;width:2px;height:18px;background:#5f6368"></div>
<div class="a" style="left:1871px;top:546px;width:18px;height:2px;background:#5f6368"></div>
<svg class="ic" style="left:1871px;top:1027px" width="14" height="18" viewBox="0 0 14 18"><path d="M3 2 L10 9 L3 16" fill="none" stroke="#5f6368" stroke-width="2.4"/></svg>
<div class="a" style="left:1818px;top:598px;width:11px;height:119px;background:#dadce0;border-radius:6px"></div>
<div class="a" style="left:1767px;top:964px;width:39px;height:39px;border-radius:50%;background:#f39a3d;color:#fff;font-weight:bold;font-size:21px;line-height:39px;text-align:center;letter-spacing:-1px">30</div>
<div class="a" style="left:1756px;top:1011px;width:55px;height:56px;background:#f8f9fa;border:1px solid #dadce0;border-radius:5px;box-shadow:0 1px 2px rgba(0,0,0,.1)"></div>
<svg class="ic" style="left:1770px;top:1024px" width="28" height="31" viewBox="0 0 28 31"><path d="M3 0 H25 A3 3 0 0 1 28 3 V24 A3 3 0 0 1 25 27 H18 L14 31 L10 27 H3 A3 3 0 0 1 0 24 V3 A3 3 0 0 1 3 0 Z" fill="#686868"/><path d="M14 4 Q15 12 23 13.5 Q15 15 14 23 Q13 15 5 13.5 Q13 12 14 4 Z" fill="#fff"/></svg>
<div class="a" style="left:521px;top:285px;width:1px;height:795px;background:#000"></div>
<div class="a" style="left:1601px;top:285px;width:1px;height:795px;background:#000"></div>
<div class="a" style="left:537px;top:490px;width:1047px;height:1px;background:#7a7a7a"></div>
<div class="ln it" style="top:310.90px;transform:scaleX(1.0146)">China’s increased isolation and the rigid social structure of Neo-Confucianism (a reformed version of Confucian</div>
<div class="ln it" style="top:337.90px;transform:scaleX(1.0383)">philosophy based more on rational thought) led to additional restrictions on women and the family during the Ming</div>
<div class="ln it" style="left:531.00px;top:364.90px;white-space:pre;transform:scaleX(1.0220)">dynasty (1368–1644). Women’s rights to own property, have a job, or </div>
<div class="ln it" style="left:1151.00px;top:364.90px;white-space:pre;transform:scaleX(1.0040)">be involved</div>
<div class="ln it" style="left:1251.00px;top:364.90px;white-space:pre;transform:scaleX(1.0280)"> in public life </div>
<div class="ln it" style="left:1368.00px;top:364.90px;white-space:pre;transform:scaleX(1.0359)">were very limited</div>
<div class="ln it" style="left:1521.00px;top:364.90px;white-space:pre;transform:scaleX(1.0466)"> during</div>
<div class="ln it" style="top:391.90px;transform:scaleX(1.0292)">the era. Negative stereotypes about women pervaded writings on proper family institutions. The following excerpts</div>
<div class="ln it" style="left:531.00px;top:418.90px;white-space:pre;transform:scaleX(1.0348)">from a late 16th century Ming Dynasty government </div>
<div class="ln it" style="left:993.00px;top:418.90px;white-space:pre;transform:scaleX(1.0409)">pamphlet,</div>
<div class="ln it" style="left:1083.00px;top:418.90px;white-space:pre;transform:scaleX(1.0164)"> detail what Chinese society considered as appropriate</div>
<div class="ln it" style="top:445.90px;transform:scaleX(1.0360)">arrangements between married men and women.</div>
<div class="ln" style="top:500.40px;transform:scaleX(0.9680);font-weight:bold">Primary Source:</div>
<div class="ln" style="left:531.00px;top:551.90px;white-space:pre;transform:scaleX(0.9987)">Housewives</div>
<div class="ln" style="left:637.00px;top:551.90px;white-space:pre;transform:scaleX(1.0290)"> should take full charge of the kitchen. They should make sure that the store of firewood is sufficient, so</div>
<div class="ln" style="left:531.00px;top:578.90px;white-space:pre;transform:scaleX(1.0016)">that even if it rains several days in succession, </div>
<div class="ln" style="left:942.00px;top:578.90px;white-space:pre;transform:scaleX(1.0556)">they will not be forced</div>
<div class="ln" style="left:1143.00px;top:578.90px;white-space:pre;transform:scaleX(1.0342)"> to use silver or rice to pay for firewood, </div>
<div class="ln" style="left:1504.00px;top:578.90px;white-space:pre;transform:scaleX(1.0660)">thereby</div>
<div class="ln" style="top:605.90px;transform:scaleX(1.0414)">impoverishing the family. . . .</div>
<div class="ln" style="left:531.00px;top:659.90px;white-space:pre;transform:scaleX(1.0317)">Marriage arrangement should not be made</div>
<div class="ln" style="left:916.00px;top:659.90px;white-space:pre;transform:scaleX(1.0449)"> final by the presenting of betrothal gifts until the boy and girl have both</div>
<div class="ln" style="top:686.90px;transform:scaleX(1.0333)">reached thirteen; otherwise, time might bring about changes which cause regrets.</div>
<div class="ln" style="top:740.90px;transform:scaleX(1.0252)">Most men lack resolve and listen to what their women say. As a result, blood relatives become estranged and</div>
<div class="ln" style="top:767.90px;transform:scaleX(1.0265)">competitiveness, suspicion, and distance arise between them. Therefore, when a wife first comes into a family, it</div>
<div class="ln" style="left:531.00px;top:794.90px;white-space:pre;transform:scaleX(1.0126)">should be </div>
<div class="ln" style="left:623.00px;top:794.90px;white-space:pre;transform:scaleX(0.9970)">make</div>
<div class="ln" style="left:671.00px;top:794.90px;white-space:pre;transform:scaleX(1.0285)"> clear to her that such things </div>
<div class="ln" style="left:931.00px;top:794.90px;white-space:pre;transform:scaleX(1.0549)">are prohibited</div>
<div class="ln" style="left:1058.00px;top:794.90px;white-space:pre;transform:scaleX(1.0186)">. . . .</div>
<div class="ln" style="left:531.00px;top:848.90px;white-space:pre;transform:scaleX(1.0240)">Women from lower-class families who stop at our houses </div>
<div class="ln" style="left:1046.00px;top:848.90px;white-space:pre;transform:scaleX(1.0506)">tend to </div>
<div class="ln" style="left:1115.00px;top:848.90px;white-space:pre;transform:scaleX(1.0257)">gossip, create conflicts, peek into the kitchens, or</div>
<div class="ln" style="left:531.00px;top:875.90px;white-space:pre;transform:scaleX(1.0401)">induce our women to believe in prayer and fortune-telling, </div>
<div class="ln" style="left:1058.00px;top:875.90px;white-space:pre;transform:scaleX(1.0543)">thereby </div>
<div class="ln" style="left:1133.00px;top:875.90px;white-space:pre;transform:scaleX(1.0308)">cheating them out of their money and possessions.</div>
<div class="ln" style="left:531.00px;top:902.90px;white-space:pre;transform:scaleX(1.0140)">Consequently, one</div>
<div class="ln" style="left:696.00px;top:902.90px;white-space:pre;transform:scaleX(1.0283)"> should question these women often and punish those who come for no reason, </div>
<div class="ln" style="left:1414.00px;top:902.90px;white-space:pre;transform:scaleX(1.0413)">so as</div>
<div class="ln" style="left:1463.00px;top:902.90px;white-space:pre;transform:scaleX(1.0103)"> to put a stop</div>
<div class="ln" style="top:929.90px;transform:scaleX(1.0951)">to the traffic.</div>
<div class="ln" style="left:531.00px;top:983.90px;white-space:pre;transform:scaleX(1.0046)">Blood relatives are as close as the branches of a tree, yet </div>
<div class="ln" style="left:1040.00px;top:983.90px;white-space:pre;transform:scaleX(1.0438)">their relationships can still be differentiated</div>
<div class="ln" style="left:1428.00px;top:983.90px;white-space:pre;transform:scaleX(1.0291)"> according to</div>
<div class="ln" style="left:531.00px;top:1010.90px;white-space:pre;transform:scaleX(1.0410)">importance and priority; parents should </div>
<div class="ln" style="left:891.00px;top:1010.90px;white-space:pre;transform:scaleX(1.0107)">be considered</div>
<div class="ln" style="left:1016.00px;top:1010.90px;white-space:pre;transform:scaleX(1.0359)"> before brothers, and </div>
<div class="ln" style="left:1211.00px;top:1010.90px;white-space:pre;transform:scaleX(1.0270)">brothers should be considered</div>
<div class="ln" style="left:1483.00px;top:1010.90px;white-space:pre;transform:scaleX(1.0442)"> before</div>
<div class="ln" style="top:1037.90px;transform:scaleX(1.0314)">wives and children.</div>
<div class="ul" style="left:1151px;top:388px;width:100px"></div>
<div class="ul" style="left:1368px;top:388px;width:153px"></div>
<div class="ul ulb" style="left:993px;top:442px;width:90px"></div>
<div class="ul" style="left:531px;top:576px;width:106px"></div>
<div class="ul" style="left:942px;top:603px;width:201px"></div>
<div class="ul" style="left:1504px;top:603px;width:74px"></div>
<div class="ul" style="left:531px;top:684px;width:385px"></div>
<div class="ul ulb" style="left:623px;top:818px;width:48px"></div>
<div class="ul" style="left:931px;top:818px;width:127px"></div>
<div class="ul" style="left:1046px;top:872px;width:69px"></div>
<div class="ul" style="left:1058px;top:899px;width:75px"></div>
<div class="ul" style="left:531px;top:926px;width:165px"></div>
<div class="ul" style="left:1414px;top:926px;width:49px"></div>
<div class="ul" style="left:1040px;top:1007px;width:388px"></div>
<div class="ul" style="left:891px;top:1034px;width:125px"></div>
<div class="ul" style="left:1211px;top:1034px;width:272px"></div>
<div class="a" style="left:0;top:1078px;width:1920px;height:2px;background:#c9d3de"></div>
</body></html>
